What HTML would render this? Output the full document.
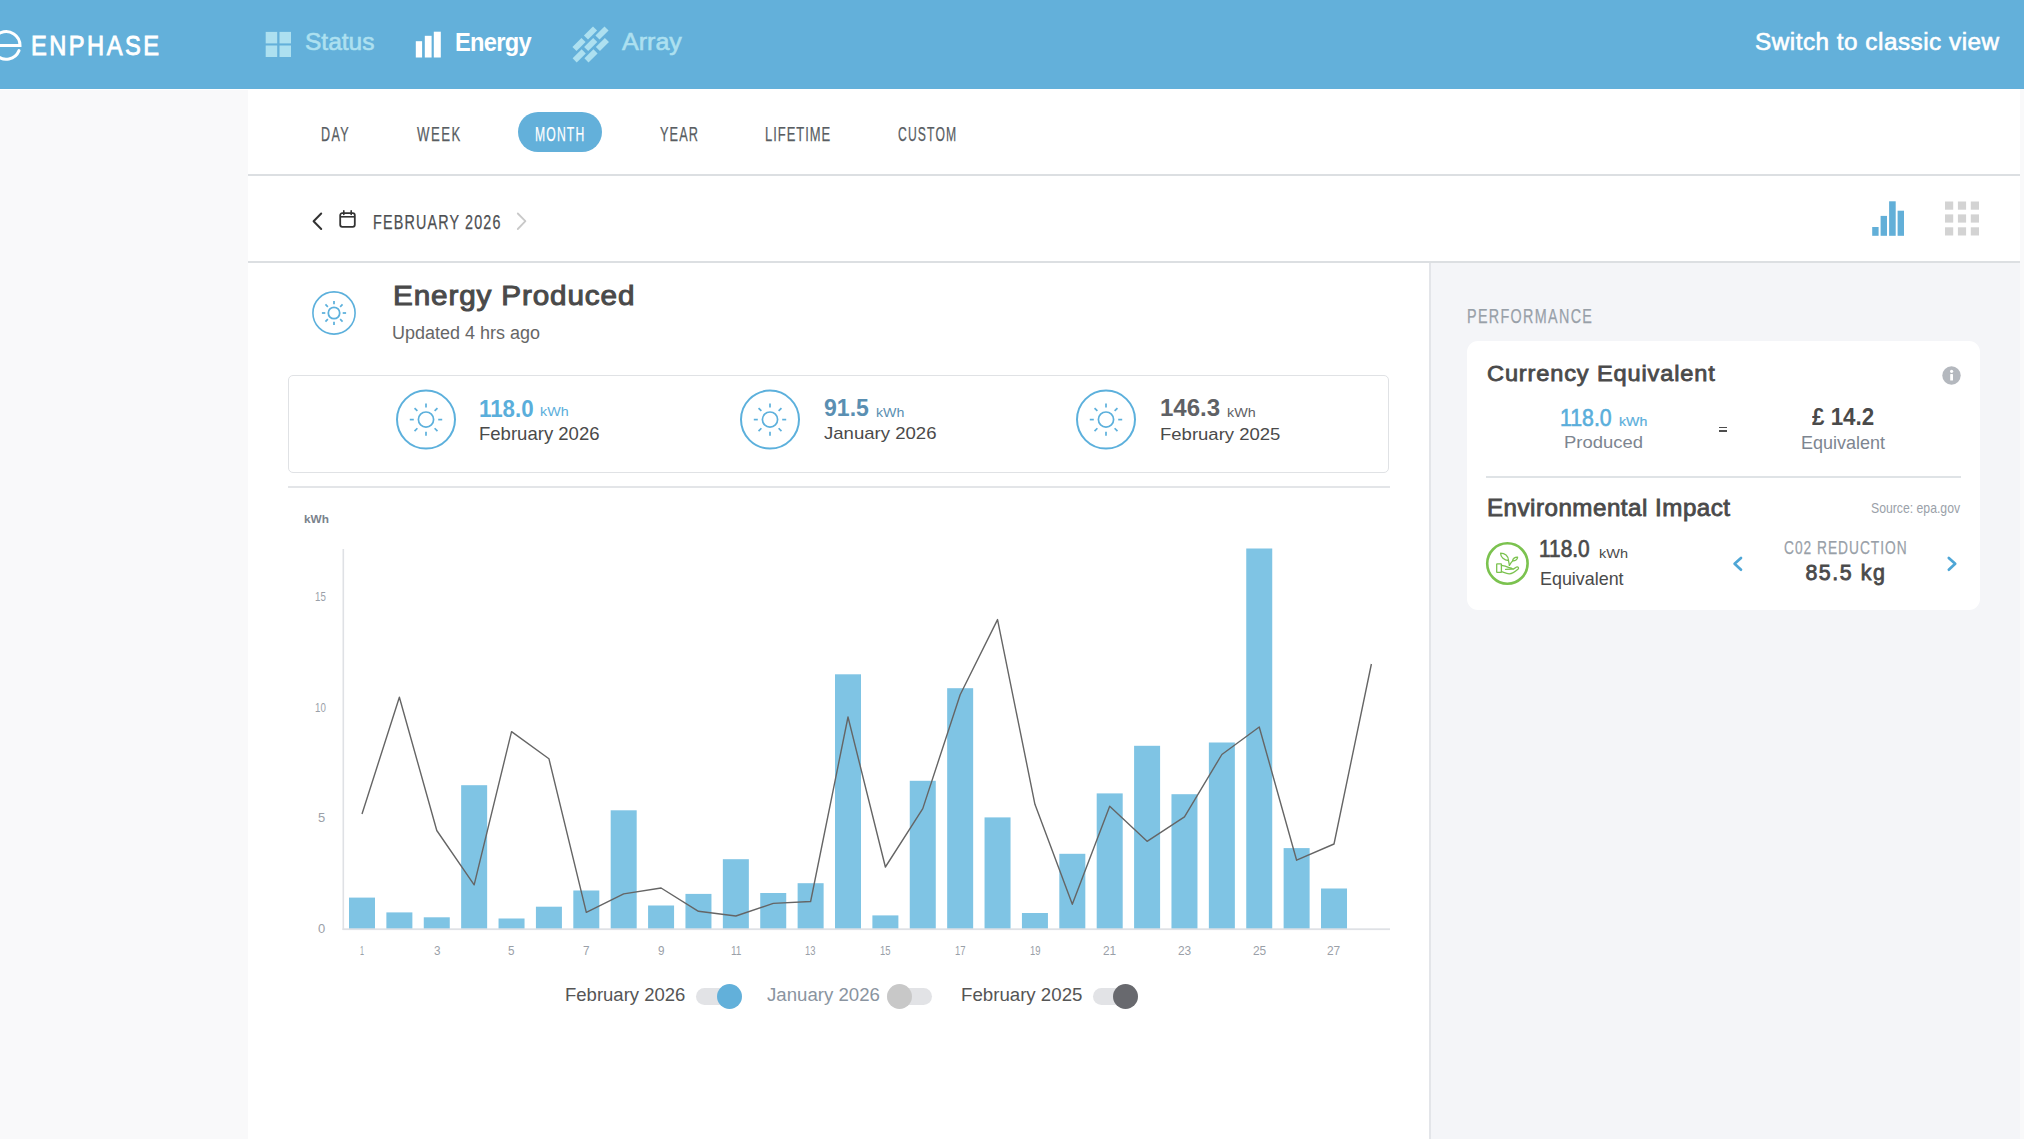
<!DOCTYPE html>
<html><head><meta charset="utf-8"><title>Enphase Energy</title><style>
html,body{margin:0;padding:0}
body{width:2024px;height:1139px;overflow:hidden;position:relative;background:#f9f9fa;font-family:"Liberation Sans",sans-serif}
.a,.t{position:absolute}
.t{white-space:nowrap;transform-origin:0 0}
.hdr{position:absolute;left:0;top:0;width:2024px;height:89px;background:#63b0da}
.main{position:absolute;left:248px;top:89px;width:1772px;height:1050px;background:#fff}
.ln{position:absolute;background:#dcdfe2}
.rp{position:absolute;left:1429px;top:263px;width:591px;height:876px;background:#f4f5f8;border-left:2px solid #e3e5e9;box-sizing:border-box}
</style></head><body>
<div class="hdr"></div>
<div class="main"></div>
<div class="a" style="left:0;top:89px;width:248px;height:1px;background:#fff"></div>
<div class="ln" style="left:248px;top:174px;width:1772px;height:2px"></div>
<div class="ln" style="left:248px;top:261px;width:1772px;height:2px"></div>
<div class="rp"></div>
<svg class="a" style="left:0;top:25px" width="30" height="42" viewBox="0 0 30 42"><path d="M19.00 25.57 A13.8 13.8 0 1 1 20.00 20.4 L-8 20.4" fill="none" stroke="#fff" stroke-width="3" stroke-linecap="round"/></svg>
<div class="t" style="left:31.48px;top:28.82px;font-size:28.21px;line-height:32px;font-weight:400;color:#fff;transform:scaleX(0.8400);letter-spacing:2.919px;-webkit-text-stroke:0.9px #fff">ENPHASE</div>
<svg class="a" style="left:265px;top:31px" width="27" height="27" viewBox="0 0 27 27" fill="#ade0f0"><rect x="0.7" y="0.9" width="11.5" height="11.5"/><rect x="14.5" y="0.9" width="11.5" height="11.5"/><rect x="0.7" y="14.5" width="11.5" height="11.5"/><rect x="14.5" y="14.5" width="11.5" height="11.5"/></svg>
<div class="t" style="left:305.20px;top:28.43px;font-size:24.14px;line-height:28px;font-weight:400;color:#ade0f0;transform:scaleX(1.0154);-webkit-text-stroke:0.6px #ade0f0">Status</div>
<svg class="a" style="left:415px;top:31px" width="28" height="28" viewBox="0 0 28 28" fill="#fff"><rect x="0.8" y="10.2" width="6.3" height="16.3"/><rect x="9.8" y="4.8" width="6.8" height="21.7"/><rect x="18.8" y="0.7" width="7" height="25.8"/></svg>
<div class="t" style="left:454.90px;top:27.66px;font-size:24.93px;line-height:29px;font-weight:700;color:#fff;transform:scaleX(0.9500);letter-spacing:-0.775px">Energy</div>
<svg class="a" style="left:570px;top:24px" width="44" height="44" viewBox="0 0 44 44" fill="#ade0f0"><rect x="14.10" y="6.10" width="12.8" height="5.8" transform="rotate(-45 20.5 9)"/><rect x="25.60" y="6.10" width="12.8" height="5.8" transform="rotate(-45 32 9)"/><rect x="2.60" y="17.60" width="12.8" height="5.8" transform="rotate(-45 9 20.5)"/><rect x="14.30" y="17.60" width="12.8" height="5.8" transform="rotate(-45 20.7 20.5)"/><rect x="26.00" y="17.60" width="12.8" height="5.8" transform="rotate(-45 32.4 20.5)"/><rect x="2.80" y="29.00" width="12.8" height="5.8" transform="rotate(-45 9.2 31.9)"/><rect x="14.60" y="29.00" width="12.8" height="5.8" transform="rotate(-45 21 31.9)"/></svg>
<div class="t" style="left:621.81px;top:28.31px;font-size:24.49px;line-height:28px;font-weight:400;color:#ade0f0;transform:scaleX(1.0233);-webkit-text-stroke:0.6px #ade0f0">Array</div>
<div class="t" style="left:1754.71px;top:29.13px;font-size:23.59px;line-height:27px;font-weight:400;color:#fff;transform:scaleX(1.0300);letter-spacing:0.491px;-webkit-text-stroke:0.6px #fff">Switch to classic view</div>
<div class="a" style="left:517.5px;top:112px;width:84px;height:40px;border-radius:20px;background:#63b0da"></div>
<div class="t" style="left:321.28px;top:122.98px;font-size:20.25px;line-height:23px;font-weight:400;color:#585d62;transform:scaleX(0.6200);letter-spacing:2.167px;-webkit-text-stroke:0.25px #585d62">DAY</div>
<div class="t" style="left:416.58px;top:122.98px;font-size:20.25px;line-height:23px;font-weight:400;color:#585d62;transform:scaleX(0.6500);letter-spacing:2.297px;-webkit-text-stroke:0.25px #585d62">WEEK</div>
<div class="t" style="left:534.88px;top:123.08px;font-size:19.96px;line-height:23px;font-weight:400;color:#fff;transform:scaleX(0.6100);letter-spacing:1.892px;-webkit-text-stroke:0.25px #fff">MONTH</div>
<div class="t" style="left:659.58px;top:122.98px;font-size:20.25px;line-height:23px;font-weight:400;color:#585d62;transform:scaleX(0.6300);letter-spacing:1.735px;-webkit-text-stroke:0.25px #585d62">YEAR</div>
<div class="t" style="left:764.58px;top:122.98px;font-size:20.25px;line-height:23px;font-weight:400;color:#585d62;transform:scaleX(0.6400);letter-spacing:1.545px;-webkit-text-stroke:0.25px #585d62">LIFETIME</div>
<div class="t" style="left:897.58px;top:123.08px;font-size:19.96px;line-height:23px;font-weight:400;color:#585d62;transform:scaleX(0.6100);letter-spacing:1.869px;-webkit-text-stroke:0.25px #585d62">CUSTOM</div>
<svg class="a" style="left:305px;top:205px" width="240" height="32" viewBox="0 0 240 32"><path d="M16.2 8.5 L8.6 16.2 L16.2 24" fill="none" stroke="#333" stroke-width="2" stroke-linecap="round" stroke-linejoin="round"/><rect x="35.2" y="8.2" width="14.6" height="13.6" rx="2" fill="none" stroke="#333" stroke-width="1.8"/><line x1="35.2" y1="11.8" x2="49.8" y2="11.8" stroke="#333" stroke-width="1.6"/><line x1="38.8" y1="5.8" x2="38.8" y2="9.5" stroke="#333" stroke-width="1.6" stroke-linecap="round"/><line x1="46.2" y1="5.8" x2="46.2" y2="9.5" stroke="#333" stroke-width="1.6" stroke-linecap="round"/><path d="M212.8 8.5 L220.4 16.2 L212.8 24" fill="none" stroke="#c9c9c9" stroke-width="1.8" stroke-linecap="round" stroke-linejoin="round"/></svg>
<div class="t" style="left:372.69px;top:210.78px;font-size:19.39px;line-height:22px;font-weight:400;color:#4d4f52;transform:scaleX(0.7400);letter-spacing:1.581px;-webkit-text-stroke:0.25px #4d4f52">FEBRUARY 2026</div>
<svg class="a" style="left:1860px;top:195px" width="130" height="50" viewBox="1860 195 130 50"><g fill="#62afd8"><rect x="1872.2" y="227" width="6.4" height="8.8"/><rect x="1880.6" y="215.9" width="6.4" height="19.9"/><rect x="1889.1" y="201.3" width="6.6" height="34.5"/><rect x="1897.6" y="210.7" width="6.4" height="25.1"/></g><g fill="#d3d3d3"><rect x="1945" y="201.5" width="8.2" height="8.2"/><rect x="1957.9" y="201.5" width="8.2" height="8.2"/><rect x="1970.8" y="201.5" width="8.2" height="8.2"/><rect x="1945" y="214.4" width="8.2" height="8.2"/><rect x="1957.9" y="214.4" width="8.2" height="8.2"/><rect x="1970.8" y="214.4" width="8.2" height="8.2"/><rect x="1945" y="227.3" width="8.2" height="8.2"/><rect x="1957.9" y="227.3" width="8.2" height="8.2"/><rect x="1970.8" y="227.3" width="8.2" height="8.2"/></g></svg>
<svg class="a" style="left:0;top:0" width="2024" height="1139" viewBox="0 0 2024 1139"><circle cx="334" cy="313" r="21.1" fill="none" stroke="#5cb0dc" stroke-width="1.6"/><circle cx="334" cy="313" r="5.7" fill="none" stroke="#5cb0dc" stroke-width="1.75"/><line x1="342.70" y1="313.00" x2="346.10" y2="313.00" stroke="#5cb0dc" stroke-width="1.75"/><line x1="340.15" y1="319.15" x2="342.56" y2="321.56" stroke="#5cb0dc" stroke-width="1.75"/><line x1="334.00" y1="321.70" x2="334.00" y2="325.10" stroke="#5cb0dc" stroke-width="1.75"/><line x1="327.85" y1="319.15" x2="325.44" y2="321.56" stroke="#5cb0dc" stroke-width="1.75"/><line x1="325.30" y1="313.00" x2="321.90" y2="313.00" stroke="#5cb0dc" stroke-width="1.75"/><line x1="327.85" y1="306.85" x2="325.44" y2="304.44" stroke="#5cb0dc" stroke-width="1.75"/><line x1="334.00" y1="304.30" x2="334.00" y2="300.90" stroke="#5cb0dc" stroke-width="1.75"/><line x1="340.15" y1="306.85" x2="342.56" y2="304.44" stroke="#5cb0dc" stroke-width="1.75"/><circle cx="426" cy="419.6" r="29" fill="none" stroke="#5cb0dc" stroke-width="2"/><circle cx="426" cy="419.6" r="7.6" fill="none" stroke="#5cb0dc" stroke-width="1.7"/><line x1="438.20" y1="419.60" x2="442.20" y2="419.60" stroke="#5cb0dc" stroke-width="1.7"/><line x1="434.63" y1="428.23" x2="437.46" y2="431.06" stroke="#5cb0dc" stroke-width="1.7"/><line x1="426.00" y1="431.80" x2="426.00" y2="435.80" stroke="#5cb0dc" stroke-width="1.7"/><line x1="417.37" y1="428.23" x2="414.54" y2="431.06" stroke="#5cb0dc" stroke-width="1.7"/><line x1="413.80" y1="419.60" x2="409.80" y2="419.60" stroke="#5cb0dc" stroke-width="1.7"/><line x1="417.37" y1="410.97" x2="414.54" y2="408.14" stroke="#5cb0dc" stroke-width="1.7"/><line x1="426.00" y1="407.40" x2="426.00" y2="403.40" stroke="#5cb0dc" stroke-width="1.7"/><line x1="434.63" y1="410.97" x2="437.46" y2="408.14" stroke="#5cb0dc" stroke-width="1.7"/><circle cx="770" cy="419.6" r="29" fill="none" stroke="#5cb0dc" stroke-width="2"/><circle cx="770" cy="419.6" r="7.6" fill="none" stroke="#5cb0dc" stroke-width="1.7"/><line x1="782.20" y1="419.60" x2="786.20" y2="419.60" stroke="#5cb0dc" stroke-width="1.7"/><line x1="778.63" y1="428.23" x2="781.46" y2="431.06" stroke="#5cb0dc" stroke-width="1.7"/><line x1="770.00" y1="431.80" x2="770.00" y2="435.80" stroke="#5cb0dc" stroke-width="1.7"/><line x1="761.37" y1="428.23" x2="758.54" y2="431.06" stroke="#5cb0dc" stroke-width="1.7"/><line x1="757.80" y1="419.60" x2="753.80" y2="419.60" stroke="#5cb0dc" stroke-width="1.7"/><line x1="761.37" y1="410.97" x2="758.54" y2="408.14" stroke="#5cb0dc" stroke-width="1.7"/><line x1="770.00" y1="407.40" x2="770.00" y2="403.40" stroke="#5cb0dc" stroke-width="1.7"/><line x1="778.63" y1="410.97" x2="781.46" y2="408.14" stroke="#5cb0dc" stroke-width="1.7"/><circle cx="1106" cy="419.6" r="29" fill="none" stroke="#5cb0dc" stroke-width="2"/><circle cx="1106" cy="419.6" r="7.6" fill="none" stroke="#5cb0dc" stroke-width="1.7"/><line x1="1118.20" y1="419.60" x2="1122.20" y2="419.60" stroke="#5cb0dc" stroke-width="1.7"/><line x1="1114.63" y1="428.23" x2="1117.46" y2="431.06" stroke="#5cb0dc" stroke-width="1.7"/><line x1="1106.00" y1="431.80" x2="1106.00" y2="435.80" stroke="#5cb0dc" stroke-width="1.7"/><line x1="1097.37" y1="428.23" x2="1094.54" y2="431.06" stroke="#5cb0dc" stroke-width="1.7"/><line x1="1093.80" y1="419.60" x2="1089.80" y2="419.60" stroke="#5cb0dc" stroke-width="1.7"/><line x1="1097.37" y1="410.97" x2="1094.54" y2="408.14" stroke="#5cb0dc" stroke-width="1.7"/><line x1="1106.00" y1="407.40" x2="1106.00" y2="403.40" stroke="#5cb0dc" stroke-width="1.7"/><line x1="1114.63" y1="410.97" x2="1117.46" y2="408.14" stroke="#5cb0dc" stroke-width="1.7"/></svg>
<div class="t" style="left:392.54px;top:279.99px;font-size:27.72px;line-height:32px;font-weight:400;color:#4a4a4a;transform:scaleX(1.0700);letter-spacing:0.817px;-webkit-text-stroke:1.0px #4a4a4a">Energy Produced</div>
<div class="t" style="left:392.00px;top:321.55px;font-size:18.62px;line-height:21px;font-weight:400;color:#666;transform:scaleX(0.9658)">Updated 4 hrs ago</div>
<div class="a" style="left:288px;top:374.5px;width:1099px;height:96px;border:1.6px solid #e0e2e5;border-radius:5px"></div>
<div class="ln" style="left:288px;top:485.5px;width:1102px;height:2px;background:#e3e5e8"></div>
<div class="t" style="left:479.00px;top:395.23px;font-size:23.86px;line-height:27px;font-weight:700;color:#5aaedb;transform:scaleX(0.9360)">118.0</div>
<div class="t" style="left:540.40px;top:405.10px;font-size:12.69px;line-height:15px;font-weight:400;color:#5aaedb;transform:scaleX(1.1269)">kWh</div>
<div class="t" style="left:479.40px;top:424.29px;font-size:17.93px;line-height:21px;font-weight:400;color:#4a4a4a;transform:scaleX(1.0339)">February 2026</div>
<div class="t" style="left:823.75px;top:395.28px;font-size:23.43px;line-height:27px;font-weight:700;color:#5a8fb2;transform:scaleX(0.9842)">91.5</div>
<div class="t" style="left:875.50px;top:405.55px;font-size:12.55px;line-height:14px;font-weight:400;color:#5a8fb2;transform:scaleX(1.1313)">kWh</div>
<div class="t" style="left:823.75px;top:424.31px;font-size:17.00px;line-height:20px;font-weight:400;color:#4a4a4a;transform:scaleX(1.0920)">January 2026</div>
<div class="t" style="left:1159.75px;top:395.28px;font-size:23.43px;line-height:27px;font-weight:700;color:#5f6165;transform:scaleX(1.0266)">146.3</div>
<div class="t" style="left:1226.80px;top:405.55px;font-size:12.55px;line-height:14px;font-weight:400;color:#5f6165;transform:scaleX(1.1433)">kWh</div>
<div class="t" style="left:1159.75px;top:425.01px;font-size:16.41px;line-height:19px;font-weight:400;color:#4a4a4a;transform:scaleX(1.1281)">February 2025</div>
<svg class="a" style="left:0;top:0" width="2024" height="1139" viewBox="0 0 2024 1139"><rect x="349.00" y="897.6" width="26" height="31.40" fill="#7fc4e4"/><rect x="386.38" y="912.4" width="26" height="16.60" fill="#7fc4e4"/><rect x="423.77" y="917.3" width="26" height="11.70" fill="#7fc4e4"/><rect x="461.15" y="785.2" width="26" height="143.80" fill="#7fc4e4"/><rect x="498.54" y="918.5" width="26" height="10.50" fill="#7fc4e4"/><rect x="535.92" y="906.7" width="26" height="22.30" fill="#7fc4e4"/><rect x="573.31" y="890.5" width="26" height="38.50" fill="#7fc4e4"/><rect x="610.69" y="810.3" width="26" height="118.70" fill="#7fc4e4"/><rect x="648.08" y="905.5" width="26" height="23.50" fill="#7fc4e4"/><rect x="685.46" y="893.9" width="26" height="35.10" fill="#7fc4e4"/><rect x="722.85" y="859.2" width="26" height="69.80" fill="#7fc4e4"/><rect x="760.23" y="893" width="26" height="36.00" fill="#7fc4e4"/><rect x="797.62" y="883.2" width="26" height="45.80" fill="#7fc4e4"/><rect x="835.00" y="674.3" width="26" height="254.70" fill="#7fc4e4"/><rect x="872.39" y="915.4" width="26" height="13.60" fill="#7fc4e4"/><rect x="909.77" y="780.8" width="26" height="148.20" fill="#7fc4e4"/><rect x="947.16" y="688.2" width="26" height="240.80" fill="#7fc4e4"/><rect x="984.54" y="817.4" width="26" height="111.60" fill="#7fc4e4"/><rect x="1021.93" y="913" width="26" height="16.00" fill="#7fc4e4"/><rect x="1059.32" y="853.8" width="26" height="75.20" fill="#7fc4e4"/><rect x="1096.70" y="793.4" width="26" height="135.60" fill="#7fc4e4"/><rect x="1134.09" y="745.8" width="26" height="183.20" fill="#7fc4e4"/><rect x="1171.47" y="794.2" width="26" height="134.80" fill="#7fc4e4"/><rect x="1208.86" y="742.5" width="26" height="186.50" fill="#7fc4e4"/><rect x="1246.24" y="548.5" width="26" height="380.50" fill="#7fc4e4"/><rect x="1283.62" y="848.1" width="26" height="80.90" fill="#7fc4e4"/><rect x="1321.01" y="888.5" width="26" height="40.50" fill="#7fc4e4"/><rect x="342.5" y="549" width="1.6" height="381" fill="#dfe1e5"/><rect x="342.5" y="928.3" width="1047.5" height="1.8" fill="#dfe1e5"/><polyline points="362.00,814 399.38,697.2 436.77,830.5 474.15,884.8 511.54,731.6 548.92,758.7 586.31,912.4 623.69,893.9 661.08,888 698.46,911.3 735.85,916 773.23,903.4 810.62,901.5 848.00,717 885.39,867 922.77,808.6 960.16,694.8 997.54,619.6 1034.93,804.3 1072.32,904.3 1109.70,806.2 1147.09,841.3 1184.47,816.8 1221.86,754.5 1259.24,727 1296.62,860.2 1334.01,844 1371.39,664" fill="none" stroke="#656565" stroke-width="1.4" stroke-linejoin="round"/></svg>
<div class="t" style="left:304.30px;top:512.14px;font-size:11.72px;line-height:13px;font-weight:700;color:#7a828c;transform:scaleX(1.0066)">kWh</div>
<div class="t" style="left:314.50px;top:590.48px;font-size:12.17px;line-height:14px;font-weight:400;color:#9aa0a8;transform:scaleX(0.7992)">15</div>
<div class="t" style="left:314.50px;top:700.94px;font-size:12.00px;line-height:14px;font-weight:400;color:#9aa0a8;transform:scaleX(0.8108)">10</div>
<div class="t" style="left:318.10px;top:811.28px;font-size:12.17px;line-height:14px;font-weight:400;color:#9aa0a8;transform:scaleX(1.0656)">5</div>
<div class="t" style="left:318.10px;top:921.74px;font-size:12.00px;line-height:14px;font-weight:400;color:#9aa0a8;transform:scaleX(1.0811)">0</div>
<div class="t" style="left:360.00px;top:943.93px;font-size:12.61px;line-height:14px;font-weight:400;color:#9aa0a8;transform:scaleX(0.5716)">1</div>
<div class="t" style="left:433.52px;top:943.99px;font-size:12.43px;line-height:14px;font-weight:400;color:#9aa0a8;transform:scaleX(0.9423)">3</div>
<div class="t" style="left:508.29px;top:943.93px;font-size:12.61px;line-height:14px;font-weight:400;color:#9aa0a8;transform:scaleX(0.9289)">5</div>
<div class="t" style="left:583.06px;top:943.93px;font-size:12.61px;line-height:14px;font-weight:400;color:#9aa0a8;transform:scaleX(0.9289)">7</div>
<div class="t" style="left:657.83px;top:943.99px;font-size:12.43px;line-height:14px;font-weight:400;color:#9aa0a8;transform:scaleX(0.9423)">9</div>
<div class="t" style="left:730.60px;top:943.93px;font-size:12.61px;line-height:14px;font-weight:400;color:#9aa0a8;transform:scaleX(0.8007)">11</div>
<div class="t" style="left:805.37px;top:943.99px;font-size:12.43px;line-height:14px;font-weight:400;color:#9aa0a8;transform:scaleX(0.7611)">13</div>
<div class="t" style="left:880.14px;top:943.93px;font-size:12.61px;line-height:14px;font-weight:400;color:#9aa0a8;transform:scaleX(0.7502)">15</div>
<div class="t" style="left:954.91px;top:943.93px;font-size:12.61px;line-height:14px;font-weight:400;color:#9aa0a8;transform:scaleX(0.7502)">17</div>
<div class="t" style="left:1029.68px;top:943.99px;font-size:12.43px;line-height:14px;font-weight:400;color:#9aa0a8;transform:scaleX(0.7611)">19</div>
<div class="t" style="left:1103.10px;top:943.99px;font-size:12.43px;line-height:14px;font-weight:400;color:#9aa0a8;transform:scaleX(0.9568)">21</div>
<div class="t" style="left:1177.87px;top:943.99px;font-size:12.43px;line-height:14px;font-weight:400;color:#9aa0a8;transform:scaleX(0.9568)">23</div>
<div class="t" style="left:1252.64px;top:943.99px;font-size:12.43px;line-height:14px;font-weight:400;color:#9aa0a8;transform:scaleX(0.9568)">25</div>
<div class="t" style="left:1327.41px;top:943.99px;font-size:12.43px;line-height:14px;font-weight:400;color:#9aa0a8;transform:scaleX(0.9568)">27</div>
<div class="t" style="left:564.90px;top:984.30px;font-size:18.48px;line-height:21px;font-weight:400;color:#555;transform:scaleX(1.0022)">February 2026</div>
<div class="t" style="left:767.00px;top:983.57px;font-size:19.14px;line-height:22px;font-weight:400;color:#8a94a0;transform:scaleX(0.9741)">January 2026</div>
<div class="t" style="left:960.50px;top:984.30px;font-size:18.48px;line-height:21px;font-weight:400;color:#555;transform:scaleX(1.0106)">February 2025</div>
<div class="a" style="left:696px;top:988.3px;width:44px;height:17px;border-radius:9px;background:#e2e3e6"></div>
<div class="a" style="left:717px;top:984.4px;width:25px;height:25px;border-radius:50%;background:#62b0da"></div>
<div class="a" style="left:887px;top:988.3px;width:45px;height:17px;border-radius:9px;background:#e2e3e6"></div>
<div class="a" style="left:886.5px;top:984.4px;width:25px;height:25px;border-radius:50%;background:#c8c8c8"></div>
<div class="a" style="left:1093px;top:988.3px;width:44px;height:17px;border-radius:9px;background:#e2e3e6"></div>
<div class="a" style="left:1112.5px;top:984.4px;width:25px;height:25px;border-radius:50%;background:#68696e"></div>
<div class="t" style="left:1467.29px;top:305.08px;font-size:19.39px;line-height:22px;font-weight:400;color:#98a0a8;transform:scaleX(0.7400);letter-spacing:1.811px;-webkit-text-stroke:0.25px #98a0a8">PERFORMANCE</div>
<div class="a" style="left:1466.7px;top:340.7px;width:513.5px;height:269px;border-radius:11px;background:#fff"></div>
<div class="t" style="left:1487.42px;top:360.51px;font-size:22.48px;line-height:26px;font-weight:400;color:#4a4a4a;transform:scaleX(1.0500);letter-spacing:0.811px;-webkit-text-stroke:0.8px #4a4a4a">Currency Equivalent</div>
<svg class="a" style="left:1942px;top:365.5px" width="19" height="19" viewBox="0 0 19 19"><circle cx="9.5" cy="9.5" r="9.2" fill="#b4b8be"/><rect x="8.2" y="8" width="2.8" height="6.6" rx="0.6" fill="#fff"/><circle cx="9.6" cy="5.3" r="1.6" fill="#fff"/></svg>
<div class="t" style="left:1559.98px;top:404.83px;font-size:23.00px;line-height:26px;font-weight:400;color:#5aaedb;transform:scaleX(0.9250);-webkit-text-stroke:0.6px #5aaedb">118.0</div>
<div class="t" style="left:1618.61px;top:413.66px;font-size:13.38px;line-height:15px;font-weight:400;color:#5aaedb;transform:scaleX(1.0576);-webkit-text-stroke:0.2px #5aaedb">kWh</div>
<div class="t" style="left:1564.00px;top:433.47px;font-size:17.10px;line-height:20px;font-weight:400;color:#7d8590;transform:scaleX(1.0792)">Produced</div>
<div class="a" style="left:1719.2px;top:426.6px;width:7.9px;height:1.5px;background:#4d4d4d"></div><div class="a" style="left:1719.2px;top:430.3px;width:7.9px;height:1.5px;background:#4d4d4d"></div>
<div class="t" style="left:1812.30px;top:403.49px;font-size:24.57px;line-height:28px;font-weight:700;color:#4a4a4a;transform:scaleX(0.9106)">£ 14.2</div>
<div class="t" style="left:1801.30px;top:433.29px;font-size:17.93px;line-height:21px;font-weight:400;color:#7d8590;transform:scaleX(1.0031)">Equivalent</div>
<div class="ln" style="left:1486px;top:475.5px;width:474.5px;height:2px;background:#dfe3e6"></div>
<div class="t" style="left:1487.42px;top:494.82px;font-size:23.03px;line-height:26px;font-weight:400;color:#4a4a4a;transform:scaleX(1.0500);letter-spacing:0.467px;-webkit-text-stroke:0.8px #4a4a4a">Environmental Impact</div>
<div class="t" style="left:1871.30px;top:500.40px;font-size:14.14px;line-height:16px;font-weight:400;color:#9aa1a9;transform:scaleX(0.8658)">Source: epa.gov</div>
<div class="t" style="left:1539.31px;top:535.91px;font-size:23.64px;line-height:27px;font-weight:400;color:#4a4a4a;transform:scaleX(0.8825);-webkit-text-stroke:0.7px #4a4a4a">118.0</div>
<div class="t" style="left:1599.00px;top:545.51px;font-size:13.24px;line-height:15px;font-weight:400;color:#4a4a4a;transform:scaleX(1.0951)">kWh</div>
<div class="t" style="left:1539.70px;top:568.63px;font-size:17.52px;line-height:20px;font-weight:400;color:#4a4a4a;transform:scaleX(1.0219)">Equivalent</div>
<div class="t" style="left:1783.69px;top:537.38px;font-size:19.11px;line-height:22px;font-weight:400;color:#98a0a8;transform:scaleX(0.7200);letter-spacing:1.370px;-webkit-text-stroke:0.25px #98a0a8">C02 REDUCTION</div>
<div class="t" style="left:1805.40px;top:560.89px;font-size:21.38px;line-height:25px;font-weight:400;color:#4a4a4a;transform:scaleX(1.0000);letter-spacing:1.563px;-webkit-text-stroke:0.8px #4a4a4a">85.5 kg</div>
<svg class="a" style="left:1484px;top:540px" width="48" height="48" viewBox="0 0 48 48" fill="none" stroke="#7bc24f" stroke-linecap="round" stroke-linejoin="round"><circle cx="23.4" cy="23.5" r="20.2" stroke-width="2.6"/><g stroke-width="1.3"><rect x="12.7" y="23.9" width="4.7" height="8.5" rx="0.4"/><path d="M17.4 25.3 C20.5 25.5 22.5 26.2 24.5 27.4 C26.5 27.6 28 28 28.8 29 L21.6 29.4"/><path d="M17.4 31.6 C20 32.4 22.5 33.9 25.3 33.8 C28.5 33.6 32 30.8 34.2 28.9 C35 28.1 34.1 26.5 32.6 27 L29.3 29.1"/><path d="M25.4 25.3 C25.1 23.6 24.8 22 24.5 20.6"/><path d="M25.4 25.3 C26.4 23.6 27.5 22.1 28.6 20.9"/><path d="M24.5 20.6 C20.2 20.2 16.6 17.2 16.6 13.2 C20.6 13.2 24.5 15.8 24.5 20.6 Z"/><path d="M28.6 20.9 C28.6 18.6 31 17 33.6 17.2 C33.5 19.6 31.2 21.1 28.6 20.9 Z"/></g></svg>
<svg class="a" style="left:1720px;top:545px" width="250" height="36" viewBox="1720 545 250 36"><path d="M1741 557.9 L1734.6 563.8 L1741 569.7" fill="none" stroke="#4ea6d6" stroke-width="2.7" stroke-linecap="round" stroke-linejoin="round"/><path d="M1948.8 557.9 L1955.2 563.8 L1948.8 569.7" fill="none" stroke="#4ea6d6" stroke-width="2.7" stroke-linecap="round" stroke-linejoin="round"/></svg>
</body></html>
